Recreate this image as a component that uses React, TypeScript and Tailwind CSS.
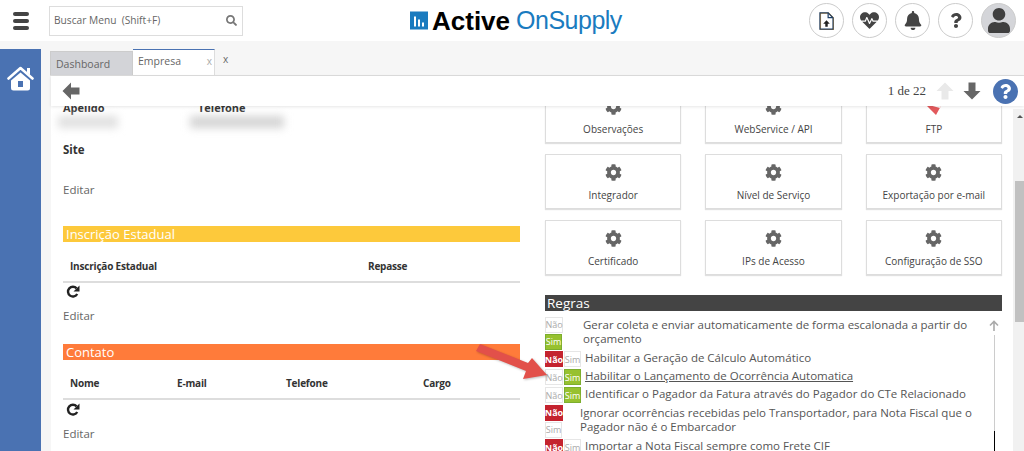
import React from 'react';
import { FaSearch, FaCog, FaBell, FaQuestion, FaUser, FaHeartbeat } from 'react-icons/fa';

const font = 'font-["Open_Sans","Noto_Sans",sans-serif]';

const BlockArrow: React.FC<{ dir: 'left' | 'up' | 'down'; className: string }> = ({ dir, className }) => {
    const rot = dir === 'left' ? 'rotate-0' : dir === 'up' ? 'rotate-90' : '-rotate-90';
    return (
        <svg viewBox="0 0 18 18" className={`${className} ${rot}`} fill="currentColor">
            <path d="M9 0.5 L0.5 9 L9 17.5 V12.5 H17.5 V5.5 H9 Z" />
        </svg>
    );
};

const Refresh: React.FC<{ className: string }> = ({ className }) => (
    <svg viewBox="0 0 14 14" className={className}>
        <path d="M11.2 9 A4.9 4.9 0 1 1 10.6 3.4" fill="none" stroke="#222" strokeWidth="2.4" />
        <path d="M13.5 0.5 V6.5 H7.5 Z" fill="#222" />
    </svg>
);

const RoundButton: React.FC<{ children: React.ReactNode }> = ({ children }) => (
    <div className="w-[35px] h-[35px] rounded-full border border-[#ccc] bg-white flex items-center justify-center text-[#444]">
        {children}
    </div>
);

const Toggle: React.FC<{ on: boolean; stacked?: boolean }> = ({ on, stacked }) => (
    <div className={`flex shrink-0 text-[9px] leading-none ${stacked ? 'flex-col w-[18px] gap-[1px]' : 'gap-[1px]'}`}>
        <span className={`w-[18px] h-[16px] flex items-center justify-center ${on ? 'bg-white text-[#aaa] border border-[#e6e6e6]' : 'bg-[#c4232f] text-white font-bold'}`}>
            Não
        </span>
        <span className={`w-[17px] h-[16px] flex items-center justify-center ${on ? 'bg-[#97c12f] text-white border border-[#7cae2e]' : 'bg-white text-[#aaa] border border-[#e6e6e6]'}`}>
            Sim
        </span>
    </div>
);

const rules = [
    { text: 'Gerar coleta e enviar automaticamente de forma escalonada a partir do orçamento', on: true, stacked: true, pad: 'pl-[20px] w-[426px]', h: 'h-[34px]' },
    { text: 'Habilitar a Geração de Cálculo Automático', on: false, pad: 'pl-[4px]', h: 'h-[18px]' },
    { text: 'Habilitar o Lançamento de Ocorrência Automatica', on: true, pad: 'pl-[4px] underline', h: 'h-[18px]' },
    { text: 'Identificar o Pagador da Fatura através do Pagador do CTe Relacionado', on: true, pad: 'pl-[4px]', h: 'h-[18px]' },
    { text: 'Ignorar ocorrências recebidas pelo Transportador, para Nota Fiscal que o Pagador não é o Embarcador', on: false, stacked: true, pad: 'pl-[17px] w-[426px]', h: 'h-[34px]' },
    { text: 'Importar a Nota Fiscal sempre como Frete CIF', on: false, pad: 'pl-[4px]', h: 'h-[18px]' },
];

const Card: React.FC<{ label: string; red?: boolean }> = ({ label, red }) => (
    <div className="h-[55px] border border-[#ddd] shadow-[0_1px_1px_rgba(0,0,0,0.12)] flex flex-col items-center pt-[9px] text-[10px] text-[#444]">
        {red ? (
            <svg viewBox="0 0 17 17" className="w-[17px] h-[17px] mb-[7px]">
                <path d="M0 6 L15 10 L17 6 L11 17 Z" fill="#e2595c" />
            </svg>
        ) : (
            <FaCog className="text-[#666] w-[17px] h-[17px] mb-[7px]" />
        )}
        <span className="leading-[14px]">{label}</span>
    </div>
);

const TableHead: React.FC<{ cols: [string, string][]; h: string }> = ({ cols, h }) => (
    <div className={`${h} border-b-2 border-[#ddd] flex items-end pb-[8px] text-[10px] leading-[14px] font-bold text-[#333] tracking-[-0.2px]`}>
        {cols.map(([label, w]) => (
            <span key={label} className={`pl-[7px] ${w}`}>{label}</span>
        ))}
    </div>
);

const App: React.FC = () => {
    return (
        <div className={`relative w-full h-[451px] overflow-hidden bg-[#f6f6f6] flex flex-col ${font} text-[#555]`}>
            <header className="h-[41px] bg-white flex items-center shrink-0">
                <div className="w-[49px] pl-[13px] flex flex-col gap-[3px]">
                    <span className="w-[16px] h-[4px] rounded-sm bg-[#444]" />
                    <span className="w-[16px] h-[4px] rounded-sm bg-[#444]" />
                    <span className="w-[16px] h-[4px] rounded-sm bg-[#444]" />
                </div>
                <div className="w-[194px] h-[30px] border border-[#ddd] flex items-center justify-between px-[4px] text-[10.2px] text-[#666]">
                    <span>Buscar Menu&nbsp; (Shift+F)</span>
                    <FaSearch className="w-[11px] h-[11px] text-[#777] mr-[1px]" />
                </div>
                <div className="ml-[167px] w-[213px] flex items-center">
                    <svg viewBox="0 0 18 18" className="w-[18px] h-[19px] shrink-0 mr-[4px]">
                        <rect width="18" height="18" fill="#1a7bbf" />
                        <rect x="4" y="5" width="2" height="10" fill="#fff" />
                        <rect x="8" y="8" width="2" height="7" fill="#fff" />
                        <rect x="12" y="11" width="2" height="4" fill="#fff" />
                    </svg>
                    <span className='font-["Liberation_Sans",sans-serif] text-[26px] font-bold text-black leading-none'>Active</span>
                    <span className='font-["Liberation_Sans",sans-serif] text-[25px] text-[#1a7bbf] leading-none ml-[6px] tracking-[-0.5px]'>OnSupply</span>
                </div>
                <div className="ml-auto mr-[8px] flex items-center gap-[8px]">
                    <RoundButton>
                        <svg viewBox="0 0 18 22" className="w-[15px] h-[18px]" fill="none">
                            <path d="M1 1 H11 L17 7 V21 H1 Z" stroke="#e8a33d" strokeWidth="1.5" transform="translate(0.6 0.4)" />
                            <path d="M1 1 H11 L17 7 V21 H1 Z" stroke="#1f3f66" strokeWidth="1.5" />
                            <path d="M11 1 V7 H17" stroke="#1f3f66" strokeWidth="1.5" />
                            <path d="M9 10 L13 14.5 H10.5 V18 H7.5 V14.5 H5 Z" fill="#222" />
                        </svg>
                    </RoundButton>
                    <RoundButton><FaHeartbeat className="w-[19px] h-[19px]" /></RoundButton>
                    <RoundButton><FaBell className="w-[18px] h-[19px]" /></RoundButton>
                    <RoundButton><FaQuestion className="w-[14px] h-[15px]" /></RoundButton>
                    <div className="w-[35px] h-[35px] rounded-full border border-[#ccc] bg-[#d4d5d9] flex items-end justify-center overflow-hidden text-[#3f3f3f]">
                        <FaUser className="w-[22px] h-[27px] mb-[3px]" />
                    </div>
                </div>
            </header>

            <div className="flex flex-1 min-h-0 pt-[8px]">
                <aside className="w-[41px] shrink-0 bg-[#4a72b2] flex justify-center pt-[17px]">
                    <svg viewBox="0 0 27 25" className="w-[27px] h-[25px]">
                        <path d="M1.5 12.5 L13.5 2 L25.5 12.5" fill="none" stroke="#fff" strokeWidth="2.6" strokeLinecap="round" strokeLinejoin="round" />
                        <path d="M20 2 H23 V9 L20 6.5 Z" fill="#fff" />
                        <path d="M13.5 6.5 L23 14.5 V22 Q23 24.5 20.5 24.5 H6.5 Q4 24.5 4 22 V14.5 Z" fill="#fff" />
                        <rect x="11" y="15" width="5" height="6" fill="#4a72b2" />
                    </svg>
                </aside>

                <main className="flex-1 min-w-0 ml-[10px] flex flex-col">
                    <div className="h-[27px] flex items-end shrink-0 border-b border-[#ddd] text-[10.5px] -ml-[1px]">
                        <div className="w-[83px] h-[24px] bg-[#d3d4d8] border border-[#ccc] border-b-0 flex items-center pl-[5px] pt-[2px] text-[#666]">Dashboard</div>
                        <div className="w-[82px] h-[26px] bg-white border-t border-t-[#4a72b2] border-r border-r-[#ddd] flex items-center justify-between pl-[5px] pr-[2px] pb-[2px] text-[#666]">
                            <span>Empresa</span>
                            <span className="text-[#aaa] text-[10px]">x</span>
                        </div>
                        <span className="self-start mt-[3px] ml-[8px] text-[10px] text-[#666]">x</span>
                    </div>

                    <div className="h-[30px] bg-white flex items-center shrink-0 pl-[11px] pr-[6px] shadow-[0_1px_3px_rgba(0,0,0,0.1)] relative z-10">
                        <BlockArrow dir="left" className="w-[18px] h-[18px] text-[#666]" />
                        <div className="ml-auto flex items-center">
                            <span className='font-["Liberation_Serif","DejaVu_Serif",serif] text-[13px] text-[#444] mr-[10px]'>1 de 22</span>
                            <BlockArrow dir="up" className="w-[18px] h-[18px] text-[#e9e9e9] mr-[9px]" />
                            <BlockArrow dir="down" className="w-[18px] h-[18px] text-[#666] mr-[12px]" />
                            <div className="w-[25px] h-[25px] rounded-full bg-[#4a72b2] flex items-center justify-center text-white">
                                <FaQuestion className="w-[13px] h-[15px]" />
                            </div>
                        </div>
                    </div>

                    <div className="flex-1 min-h-0 flex bg-white overflow-hidden">
                        <div className="flex-1 min-w-0 flex pl-[12px] overflow-hidden gap-[25px]">
                            <section className="w-[457px] shrink-0 -mt-[6px]">
                                <div className="h-[14px] flex text-[11px] font-bold text-[#333]">
                                    <span className="w-[135px]">Apelido</span>
                                    <span>Telefone</span>
                                </div>
                                <div className="h-[16px] flex mt-[2px] -ml-[5px]">
                                    <div className="w-[60px] h-[12px] bg-[#e0e0e0] blur-[4px]" />
                                    <div className="w-[94px] h-[12px] ml-[72px] bg-[#d4d4d4] blur-[4px]" />
                                </div>
                                <div className="text-[11.5px] font-bold text-[#333] mt-[10px] leading-[16px]">Site</div>
                                <div className="text-[11.5px] text-[#666] mt-[24px] leading-[16px]">Editar</div>
                                <div className="h-[16px] bg-[#fdc93b] text-white text-[13px] leading-[16px] pl-[3px] mt-[28px]">Inscrição Estadual</div>
                                <TableHead h="h-[41px]" cols={[['Inscrição Estadual', 'w-[298px]'], ['Repasse', '']]} />
                                <Refresh className="w-[14px] h-[14px] ml-[3px] mt-[2px]" />
                                <div className="text-[11.5px] text-[#666] mt-[9px] leading-[16px]">Editar</div>
                                <div className="h-[16px] bg-[#ff7b3a] text-white text-[13px] leading-[16px] pl-[3px] mt-[20px]">Contato</div>
                                <TableHead h="h-[40px]" cols={[['Nome', 'w-[107px]'], ['E-mail', 'w-[109px]'], ['Telefone', 'w-[137px]'], ['Cargo', '']]} />
                                <Refresh className="w-[14px] h-[14px] ml-[3px] mt-[3px]" />
                                <div className="text-[11.5px] text-[#666] mt-[9px] leading-[16px]">Editar</div>
                            </section>

                            <section className="w-[457px] shrink-0 relative">
                                <div className="grid grid-cols-3 gap-x-[24px] gap-y-[11px] -mt-[18px]">
                                    <Card label="Observações" />
                                    <Card label="WebService / API" />
                                    <Card label="FTP" red />
                                    <Card label="Integrador" />
                                    <Card label="Nível de Serviço" />
                                    <Card label="Exportação por e-mail" />
                                    <Card label="Certificado" />
                                    <Card label="IPs de Acesso" />
                                    <Card label="Configuração de SSO" />
                                </div>
                                <div className="mt-[20px] h-[16px] bg-[#444] text-white text-[13.5px] leading-[16px] pl-[2px]">Regras</div>
                                <div className="mt-[5px] flex flex-col text-[11.5px] leading-[14px] text-[#555]">
                                    {rules.map((rule) => (
                                        <div key={rule.text} className={`flex items-center shrink-0 ${rule.h}`}>
                                            <Toggle on={rule.on} stacked={rule.stacked} />
                                            <span className={`${rule.pad} pb-[3px]`}>{rule.text}</span>
                                        </div>
                                    ))}
                                </div>
                                <div className="absolute right-[1px] top-[214px] bottom-0 w-[14px] flex flex-col items-center">
                                    <svg viewBox="0 0 10 11" className="w-[10px] h-[11px]" fill="none" stroke="#aaa" strokeWidth="1.6">
                                        <path d="M5 11 V1.5 M1 5.5 L5 1.5 L9 5.5" />
                                    </svg>
                                    <div className="flex-1 w-[1px] mt-[4px] bg-[#ccc]" />
                                    <div className="h-[20px] w-[1px] bg-black" />
                                </div>
                            </section>
                        </div>
                        <div className="w-[11px] shrink-0 bg-[#f1f1f1] flex flex-col items-center mt-[3px]">
                            <div className="h-[6px]" />
                            <div className="w-0 h-0 ml-[2px] border-x-[3px] border-x-transparent border-b-[3px] border-b-[#555]" />
                            <div className="h-[63px]" />
                            <div className="w-[9px] self-end h-[141px] bg-[#c1c1c1]" />
                        </div>
                    </div>
                </main>
            </div>

            <svg viewBox="0 0 80 40" className="absolute left-[472px] top-[342px] w-[80px] h-[40px] drop-shadow-[1px_1px_1px_rgba(0,0,0,0.25)]">
                <path d="M8 2 L56 21 L60 16 L75 33 L51 37 L54 29 L4 9 Z" fill="#e2504a" />
            </svg>
        </div>
    );
};

export default App;
